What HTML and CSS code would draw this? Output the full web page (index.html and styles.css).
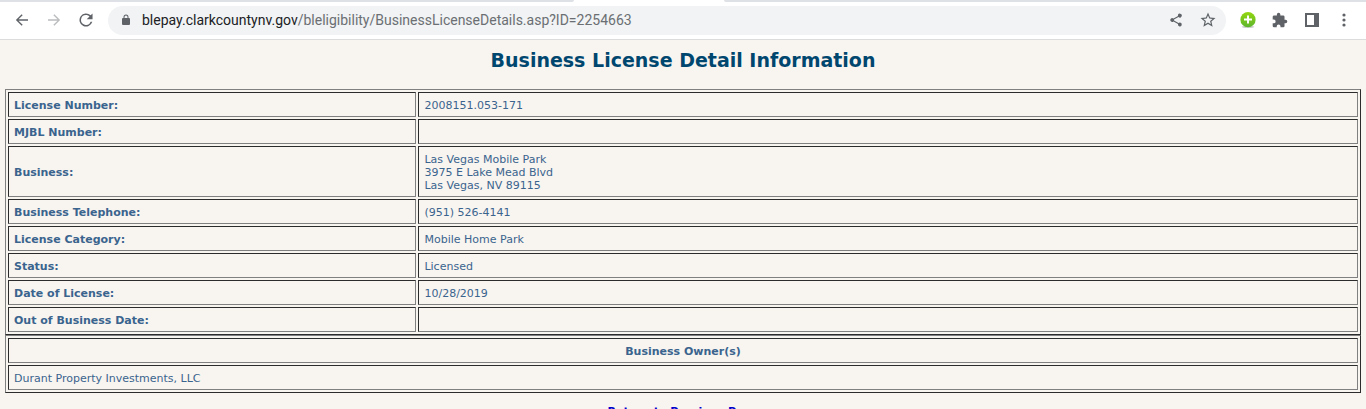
FILE: index.html
```html
<!DOCTYPE html>
<html lang="en">
<head>
  <meta charset="UTF-8">
  <meta name="viewport" content="width=device-width, initial-scale=1.0">
  <title>Business License Detail Information</title>
  <link rel="stylesheet" href="styles.css">
</head>
<body>

  <!-- Browser toolbar -->
  <header class="browser">
    <div class="tab-strip">
      <div class="tab tab-before"></div>
      <div class="tab-active"></div>
      <div class="tab tab-after"></div>
    </div>
    <div class="toolbar">
      <div class="nav-buttons">
        <button class="icon-button" aria-label="Back">
          <svg viewBox="0 0 24 24"><path d="M21 11H6.800l6.200-6.200L11.500 3.300 2.800 12l8.700 8.700L13 19.200 6.800 13H21z"/></svg>
        </button>
        <button class="icon-button disabled" aria-label="Forward">
          <svg viewBox="0 0 24 24"><path d="M3 11h14.200L11 4.800l1.500-1.500 8.700 8.700-8.700 8.700-1.500-1.500 6.200-6.200H3z"/></svg>
        </button>
        <button class="icon-button" aria-label="Reload">
          <svg viewBox="1 1 22 22"><path d="M18.400 5.600A9 9 0 1 0 20.700 14.500h-2.400A6.800 6.800 0 1 1 12 5.200c1.900 0 3.500.8 4.800 2L13 11h8V3z"/></svg>
        </button>
      </div>
      <div class="address-bar">
        <svg class="lock" viewBox="0 0 24 24"><path d="M18 8h-1V6A5 5 0 0 0 7 6v2H6a2 2 0 0 0-2 2v10a2 2 0 0 0 2 2h12a2 2 0 0 0 2-2V10a2 2 0 0 0-2-2zM9 6a3 3 0 0 1 6 0v2H9z"/></svg>
        <div class="url"><span class="host">blepay.clarkcountynv.gov</span>/bleligibility/BusinessLicenseDetails.asp?ID=2254663</div>
        <button class="icon-button" aria-label="Share">
          <svg class="small" viewBox="1 1 22 22"><path d="M18 16.100c-.8 0-1.400.3-2 .8l-7.100-4.200a3 3 0 0 0 0-1.400L16 7.200A3 3 0 1 0 15 5c0 .2 0 .5.1.7L8 9.800a3 3 0 1 0 0 4.400l7.100 4.200a3 3 0 1 0 2.900-2.300z"/></svg>
        </button>
        <button class="icon-button" aria-label="Bookmark">
          <svg viewBox="0 0 24 24"><path d="M22 9.240l-7.190-.62L12 2 9.190 8.630 2 9.240l5.460 4.730L5.820 21 12 17.270 18.180 21l-1.630-7.030zM12 15.400l-3.760 2.270 1-4.280-3.320-2.880 4.380-.38L12 6.100l1.710 4.040 4.380.38-3.320 2.880 1 4.280z"/></svg>
        </button>
      </div>
      <div class="extensions">
        <button class="icon-button" aria-label="Add">
          <svg viewBox="0 0 16 16">
            <defs>
              <linearGradient id="green" x1="0" y1="0" x2="0" y2="1">
                <stop offset="0" stop-color="#93d60f"/>
                <stop offset="1" stop-color="#5db52f"/>
              </linearGradient>
            </defs>
            <ellipse cx="8" cy="14.800" rx="6.500" ry="1.200" fill="#cfcfcf"/>
            <circle cx="8" cy="7.700" r="7.600" fill="url(#green)"/>
            <path d="M7 3.500h2v3h3v2H9v3H7v-3H4v-2h3z" fill="#fff"/>
          </svg>
        </button>
        <button class="icon-button" aria-label="Extensions">
          <svg viewBox="1 0 23 23"><path d="M20.500 11H19V7a2 2 0 0 0-2-2h-4V3.500a2.500 2.500 0 0 0-5 0V5H4a2 2 0 0 0-2 2v3.800h1.500a2.700 2.700 0 0 1 0 5.400H2V20a2 2 0 0 0 2 2h3.800v-1.500a2.700 2.700 0 0 1 5.400 0V22H17a2 2 0 0 0 2-2v-4h1.500a2.500 2.500 0 0 0 0-5z"/></svg>
        </button>
        <button class="icon-button" aria-label="Side panel">
          <svg viewBox="0 0 16 16"><path fill-rule="evenodd" d="M1 1h14v14H1zM3 3v10h7V3z"/></svg>
        </button>
        <button class="icon-button" aria-label="Menu">
          <svg viewBox="0 0 16 16"><circle cx="8" cy="3" r="1.600"/><circle cx="8" cy="8" r="1.600"/><circle cx="8" cy="13" r="1.600"/></svg>
        </button>
      </div>
    </div>
  </header>

  <!-- License details -->
  <main class="page">
    <h1>Business License Detail Information</h1>

    <table class="details">
      <tr>
        <th scope="row">License Number:</th>
        <td>2008151.053-171</td>
      </tr>
      <tr>
        <th scope="row">MJBL Number:</th>
        <td>&nbsp;</td>
      </tr>
      <tr>
        <th scope="row">Business:</th>
        <td>Las Vegas Mobile Park<br>3975 E Lake Mead Blvd<br>Las Vegas, NV 89115</td>
      </tr>
      <tr>
        <th scope="row">Business Telephone:</th>
        <td>(951) 526-4141</td>
      </tr>
      <tr>
        <th scope="row">License Category:</th>
        <td>Mobile Home Park</td>
      </tr>
      <tr>
        <th scope="row">Status:</th>
        <td>Licensed</td>
      </tr>
      <tr>
        <th scope="row">Date of License:</th>
        <td>10/28/2019</td>
      </tr>
      <tr>
        <th scope="row">Out of Business Date:</th>
        <td>&nbsp;</td>
      </tr>
    </table>

    <!-- Owners -->
    <table class="owners">
      <tr>
        <th scope="col">Business Owner(s)</th>
      </tr>
      <tr>
        <td>Durant Property Investments, LLC</td>
      </tr>
    </table>

    <p class="back"><a href="#">Return to Previous Page</a></p>
  </main>

</body>
</html>
```
FILE: styles.css
```css
* {
  margin: 0;
  padding: 0;
  box-sizing: border-box;
}

body {
  display: flex;
  flex-direction: column;
  height: 100vh;
  overflow: hidden;
  background-color: #f8f4f0;
  font-family: Verdana, "DejaVu Sans", sans-serif;
  font-size: 11px;
  line-height: 13px;
  color: #3a648e;
}

/* Browser toolbar */
.browser {
  flex: none;
  background-color: #fff;
  border-bottom: 1px solid #dcdcdc;
  font-family: Roboto, sans-serif;
}

.tab-strip {
  display: flex;
  height: 2px;
}

.tab {
  background-color: #dee1e6;
}

.tab-before {
  width: 42%;
  border-bottom-right-radius: 2px;
}

.tab-active {
  width: 11%;
}

.tab-after {
  flex: 1;
  border-bottom-left-radius: 2px;
}

.toolbar {
  display: flex;
  align-items: center;
  gap: 14px;
  padding: 4px 14px;
}

.nav-buttons,
.extensions {
  display: flex;
  gap: 16px;
  padding-bottom: 1px;
}

.icon-button {
  display: flex;
  align-items: center;
  justify-content: center;
  width: 16px;
  height: 16px;
  border: none;
  background: none;
  cursor: pointer;
}

.icon-button svg {
  flex: none;
  width: 18px;
  height: 18px;
  fill: #5f6368;
}

.icon-button .small {
  width: 14px;
  height: 14px;
}

.nav-buttons svg,
.extensions svg {
  width: 16px;
  height: 16px;
}

.disabled svg {
  fill: #babcbe;
}

.address-bar {
  flex: 1;
  display: flex;
  align-items: center;
  gap: 16px;
  height: 29px;
  padding: 0 10px 1px 12px;
  border-radius: 15px;
  background-color: #f1f3f4;
}

.lock {
  width: 12px;
  height: 12px;
  fill: #5f6368;
}

.url {
  flex: 1;
  margin-left: -6px;
  font-size: 14px;
  line-height: 20px;
  white-space: nowrap;
  color: #6b6f73;
}

.host {
  color: #202124;
}

/* Page */
.page {
  padding: 8px 5px;
}

h1 {
  margin-bottom: 17px;
  font-size: 19px;
  line-height: 24px;
  text-align: center;
  color: #00476f;
}

table {
  width: 100%;
  border: 1px solid;
  border-color: #808080 #2c2c2c #2c2c2c #808080;
  border-spacing: 2px;
}

th,
td {
  padding: 6px 5px 4px;
  border: 1px solid;
  border-color: #2c2c2c #808080 #808080 #2c2c2c;
  text-align: left;
}

.details th {
  width: 30.3%;
}

.owners th {
  text-align: center;
}

.back {
  margin-top: 12px;
  font-weight: bold;
  text-align: center;
}

.back a {
  color: #00c;
  text-decoration: none;
}
```
